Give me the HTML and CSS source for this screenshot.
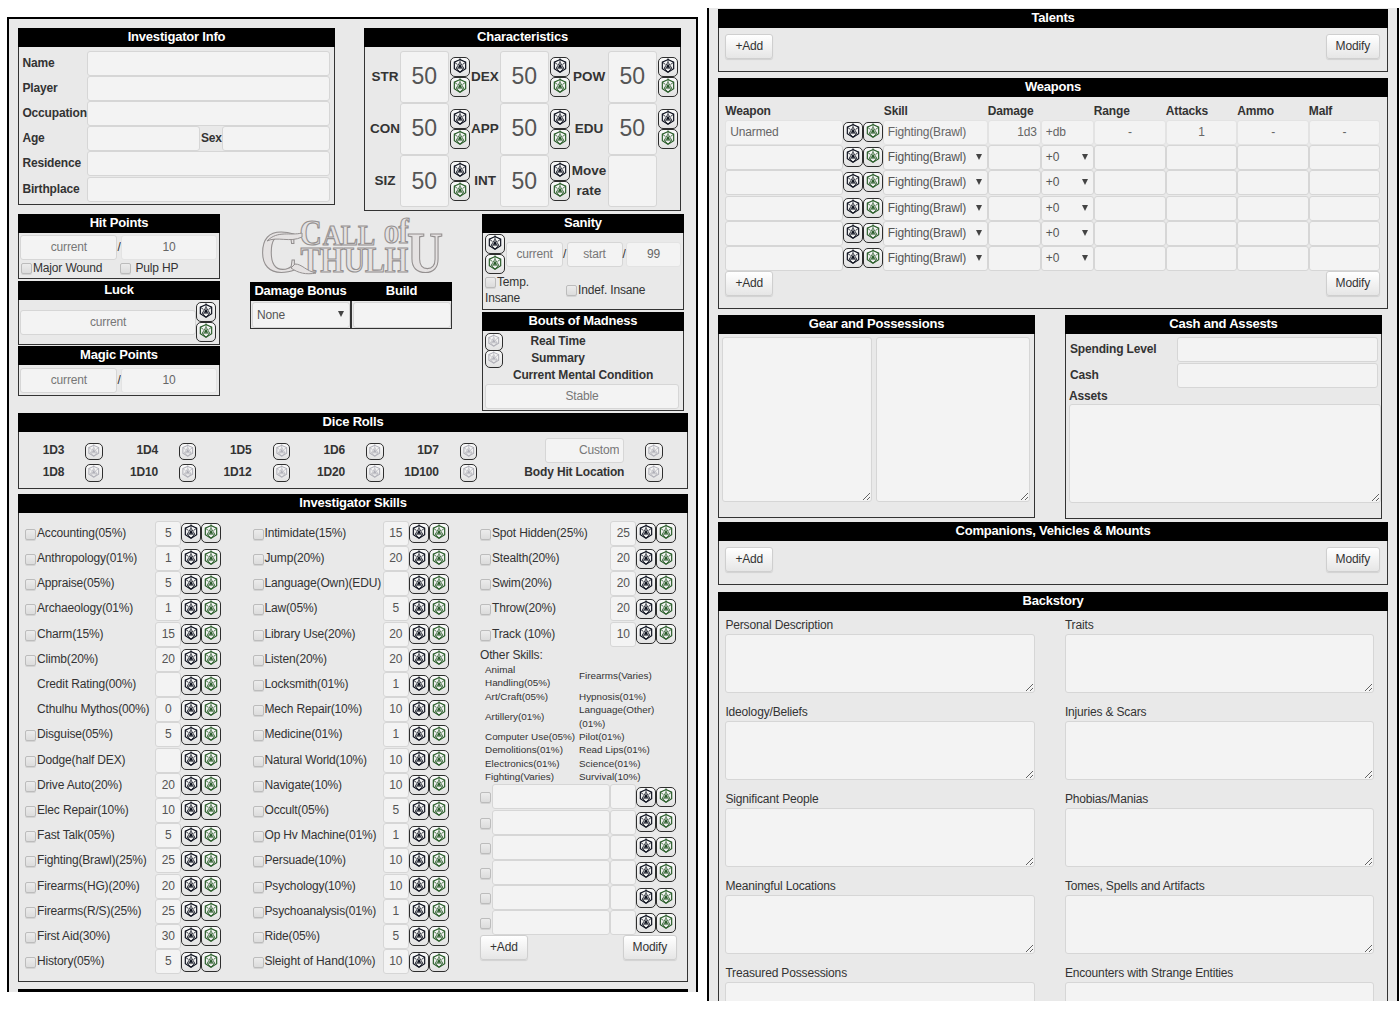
FILE: index.html
```html
<!DOCTYPE html>
<html lang="en">
<head>
<meta charset="utf-8">
<title>Investigator Sheet</title>
<link rel="stylesheet" href="styles.css">
</head>
<body>
<svg class="defs" width="0" height="0">
  <symbol id="d20" viewBox="0.8 1.4 18.4 18.4">
    <path d="M10 3L15.8 5.7V12.3L10 15.9L4.2 12.3V5.7Z" fill="none" stroke="currentColor" stroke-width="1.2"/>
    <path d="M10 1.6V5.6L13.8 11.8H6.2L10 5.6M4.2 5.7L7.4 8M15.8 5.7L12.6 8M6.2 11.8L10 15.9L13.8 11.8" fill="none" stroke="currentColor" stroke-width=".8"/>
    <path d="M10 7L12.2 11.3H7.8Z" fill="currentColor"/>
  </symbol>
</svg>
<main class="page">
  <div class="sheet sheet-left">
    <div class="top-row">
      <section class="panel info">
        <h2>Investigator Info</h2>
        <div class="info-grid">
          <b>Name</b><input class="wide">
          <b>Player</b><input class="wide">
          <b>Occupation</b><input class="wide">
          <b>Age</b><input><b class="sex">Sex</b><input>
          <b>Residence</b><input class="wide">
          <b>Birthplace</b><input class="wide">
        </div>
      </section>
      <section class="panel chars">
        <h2>Characteristics</h2>
        <div class="char-grid" id="characteristics"></div>
      </section>
    </div>

    <div class="mid-row">
      <div class="col">
        <section class="panel hp">
          <h2>Hit Points</h2>
          <div class="pair"><input placeholder="current"><span>/</span><input value="10" class="soft"></div>
          <div class="checks"><label><input type="checkbox">Major Wound</label><label class="pulp"><input type="checkbox">Pulp HP</label></div>
        </section>
        <section class="panel luck">
          <h2>Luck</h2>
          <div class="luck-row"><input placeholder="current"><div class="dice-stack"></div></div>
        </section>
        <section class="panel mp">
          <h2>Magic Points</h2>
          <div class="pair"><input placeholder="current"><span>/</span><input value="10" class="soft"></div>
        </section>
      </div>
      <div class="col">
        <svg class="logo" viewBox="0 0 182 60" width="182" height="60">
          <text class="logo-text" transform="scale(.86 1)"><tspan x="0" y="55" font-size="62">C</tspan><tspan x="46" y="28" font-size="36">C</tspan><tspan x="73 94 114" y="28" font-size="30">ALL</tspan><tspan x="144 161" y="26" font-size="36">of</tspan><tspan x="47 70 97 122 145" y="55" font-size="35">THULH</tspan><tspan x="171" y="55" font-size="58">U</tspan></text>
          <path class="logo-swash" d="M42 16C30 19 18 13 7 24C17 19 30 26 42 20Z"/>
          <path class="logo-swash" d="M35 47C42 47 46 54 56 56C46 58 38 56 31 51Z"/>
        </svg>
        <div class="bonus">
          <section class="panel"><h2>Damage Bonus</h2><div class="select">None</div></section>
          <section class="panel"><h2>Build</h2><input></section>
        </div>
      </div>
      <div class="col">
        <section class="panel sanity">
          <h2>Sanity</h2>
          <div class="san-row"><div class="dice-stack"></div><input placeholder="current"><span>/</span><input placeholder="start"><span>/</span><input value="99" class="soft"></div>
          <div class="san-checks"><label><input type="checkbox">Temp. Insane</label><label><input type="checkbox">Indef. Insane</label></div>
        </section>
        <section class="panel bouts">
          <h2>Bouts of Madness</h2>
          <div class="bout"><button class="die pale"></button><b>Real Time</b></div>
          <div class="bout"><button class="die pale"></button><b>Summary</b></div>
          <b class="condition">Current Mental Condition</b>
          <input placeholder="Stable">
        </section>
      </div>
    </div>

    <section class="panel rolls">
      <h2>Dice Rolls</h2>
      <div class="roll-grid">
        <b>1D3</b><button class="die pale"></button><b>1D4</b><button class="die pale"></button><b>1D5</b><button class="die pale"></button><b>1D6</b><button class="die pale"></button><b>1D7</b><button class="die pale"></button><input placeholder="Custom"><button class="die pale"></button>
        <b>1D8</b><button class="die pale"></button><b>1D10</b><button class="die pale"></button><b>1D12</b><button class="die pale"></button><b>1D20</b><button class="die pale"></button><b>1D100</b><button class="die pale"></button><b>Body Hit Location</b><button class="die pale"></button>
      </div>
    </section>

    <section class="panel skills">
      <h2>Investigator Skills</h2>
      <div class="skill-cols">
        <div id="skills-a"></div>
        <div id="skills-b"></div>
        <div>
          <div id="skills-c"></div>
          <p class="other-title">Other Skills:</p>
          <div class="other">
            <span>Animal Handling(05%)</span><span>Firearms(Varies)</span>
            <span>Art/Craft(05%)</span><span>Hypnosis(01%)</span>
            <span>Artillery(01%)</span><span>Language(Other)<br>(01%)</span>
            <span>Computer Use(05%)</span><span>Pilot(01%)</span>
            <span>Demolitions(01%)</span><span>Read Lips(01%)</span>
            <span>Electronics(01%)</span><span>Science(01%)</span>
            <span>Fighting(Varies)</span><span>Survival(10%)</span>
          </div>
          <div id="skills-custom"></div>
          <div class="actions"><button class="btn">+Add</button><button class="btn">Modify</button></div>
        </div>
      </div>
    </section>
    <div class="next-bar"></div>
  </div>

  <div class="sheet sheet-right">
    <section class="panel talents">
      <h2>Talents</h2>
      <div class="actions"><button class="btn">+Add</button><button class="btn">Modify</button></div>
    </section>
    <section class="panel weapons">
      <h2>Weapons</h2>
      <div class="weapon-row weapon-head"><b>Weapon</b><b class="skill-h">Skill</b><b class="dmg-h">Damage</b><b>Range</b><b>Attacks</b><b>Ammo</b><b>Malf</b></div>
      <div id="weapons"></div>
      <div class="actions"><button class="btn">+Add</button><button class="btn">Modify</button></div>
    </section>
    <div class="belongings">
      <section class="panel gear">
        <h2>Gear and Possessions</h2>
        <div class="gear-row"><textarea></textarea><textarea></textarea></div>
      </section>
      <section class="panel cash">
        <h2>Cash and Assests</h2>
        <div class="cash-row"><b>Spending Level</b><input></div>
        <div class="cash-row"><b>Cash</b><input></div>
        <b class="assets">Assets</b>
        <textarea></textarea>
      </section>
    </div>
    <section class="panel companions">
      <h2>Companions, Vehicles &amp; Mounts</h2>
      <div class="actions"><button class="btn">+Add</button><button class="btn">Modify</button></div>
    </section>
    <section class="panel backstory">
      <h2>Backstory</h2>
      <div class="story">
        <label>Personal Description<textarea></textarea></label><label>Traits<textarea></textarea></label>
        <label>Ideology/Beliefs<textarea></textarea></label><label>Injuries &amp; Scars<textarea></textarea></label>
        <label>Significant People<textarea></textarea></label><label>Phobias/Manias<textarea></textarea></label>
        <label>Meaningful Locations<textarea></textarea></label><label>Tomes, Spells and Artifacts<textarea></textarea></label>
        <label>Treasured Possessions<textarea></textarea></label><label>Encounters with Strange Entities<textarea></textarea></label>
      </div>
    </section>
  </div>
</main>
<script src="sheet.js"></script>
</body>
</html>
```
FILE: styles.css
```css
* { box-sizing: border-box; }

body {
  margin: 0;
  background: #fff;
  color: #333;
  font: 12px/18px "Liberation Sans", Arial, sans-serif;
  letter-spacing: -.16px;
}

.defs { position: absolute; }

.page { display: flex; align-items: flex-start; height: 1009px; overflow: hidden; }

.sheet { background: #e9e9e9; border: solid #000; overflow: hidden; flex: none; }
.sheet-left { margin: 17px 0 0 7px; width: 691px; height: 975px; border-width: 2px 2px 0; padding: 9px 0 0 9px; }
.sheet-right { margin: 8px 0 0 9px; width: 692px; height: 993px; border-width: 0 2px; padding: 1px 0 0 9px; }

.panel { border: 1px solid #333; position: relative; }
.panel h2 {
  margin: -1px -1px 0;
  height: 19px;
  background: #000;
  color: #fff;
  font-size: 13px;
  letter-spacing: -.2px;
  line-height: 18px;
  text-align: center;
}

input, textarea, .select {
  display: block;
  appearance: none;
  margin: 0;
  padding: 0 4px 1px;
  min-width: 0;
  width: 100%;
  height: 25px;
  border: 1px solid #d6d6d6;
  border-radius: 3px;
  background: #f3f3f3;
  color: #555;
  font: inherit;
  letter-spacing: inherit;
  text-align: center;
}
textarea { resize: both; }
input::placeholder { color: #777; opacity: 1; }
input.soft { border-color: #e3e3e3; color: #666; }
input[type="checkbox"] {
  display: inline-block;
  width: 11px;
  height: 11px;
  padding: 0;
  margin: 0 1px 0 0;
  vertical-align: -2px;
  border: 1px solid #bcbcbc;
  border-radius: 2px;
  background: linear-gradient(#ececec, #dcdcdc);
  box-shadow: 0 1px 0 #d4d4d4;
}
.select { text-align: left; padding: 0 4px; line-height: 23px; position: relative; }
.select::after {
  content: "";
  position: absolute;
  right: 5px;
  top: 8px;
  border: solid transparent;
  border-width: 6px 3px 0;
  border-top-color: #444;
}

.die {
  display: block;
  flex: none;
  width: 20px;
  height: 20px;
  padding: 0;
  border: 1.4px solid #2e2e2e;
  border-radius: 5px;
  background: linear-gradient(#fafafa, #e2e2e2);
  color: #0b0f1c;
}
.die.green { color: #285c28; }
.die.pale { width: 17.5px; height: 17.5px; color: #b0b0b8; }
.die svg { display: block; width: 100%; height: 100%; }
.dice-stack { width: 20px; flex: none; }

.btn {
  height: 25px;
  padding: 0 9px 2px;
  border: 1px solid #cfcfcf;
  border-radius: 3px;
  background: linear-gradient(#fff, #e6e6e6);
  box-shadow: 0 1px 1px rgba(0, 0, 0, .1);
  color: #333;
  font: inherit;
  letter-spacing: inherit;
}
.actions { display: flex; justify-content: space-between; }

/* top row */
.top-row { display: flex; gap: 29px; align-items: flex-start; }
.info { width: 317px; height: 177px; }
.info-grid { display: grid; grid-template-columns: 65.5px 113px 22px 108px; grid-auto-rows: 25.2px; padding: 3.6px 0 0 2.4px; }
.info-grid b { line-height: 25px; padding-left: 1px; }
.info-grid .wide { grid-column: span 3; }
.chars { width: 317px; height: 183px; }
.char-grid { display: grid; grid-template-columns: 35px 48.5px 21.5px 30px 48.5px 21.5px 38px 48.5px 21.5px; grid-auto-rows: 52.2px; padding-top: 3.6px; align-items: center; }
.char-grid b { font-size: 13.5px; line-height: 20px; text-align: center; letter-spacing: 0; }
.char-grid b:nth-of-type(3n+1) { padding-left: 5px; }
.char-grid input { height: 52px; font-size: 23px; padding: 0; letter-spacing: 0; }
.char-grid .dice-stack { margin-left: 1px; }

/* middle row */
.mid-row { display: grid; grid-template-columns: 202px 202px 202px; column-gap: 30px; margin-top: 3px; height: 199px; }
.pair { display: grid; grid-template-columns: 97px 3.5px 96px; padding: 2px 0 0 1.4px; line-height: 24px; }
.hp { height: 65px; }
.checks { display: flex; padding: 0 0 0 2px; line-height: 16px; }
.pulp { margin-left: 18px; }
.pulp input { margin-right: 4px; }
.luck { height: 64px; margin-top: 2px; }
.luck-row { display: flex; padding: 2px 0 0 1.4px; align-items: center; }
.luck-row input { width: 175.5px; }
.mp { height: 50px; margin-top: 1px; }
.mp .pair { padding-top: 3px; }
.logo { display: block; margin: 3px 0 5px 10px; overflow: visible; }
.logo-text { font-family: "Liberation Serif", serif; font-weight: 700; letter-spacing: 0; fill: #e5e2e2; stroke: #949090; stroke-width: 1.2; }
.logo-swash { fill: #e5e2e2; stroke: #949090; stroke-width: 1; }
.bonus { display: flex; }
.bonus .panel { width: 101px; height: 47px; }
.bonus .select, .bonus input { margin: 1px 0 0 1px; width: 98px; height: 26px; }
.bonus .select { line-height: 24px; }
.sanity { height: 96px; }
.san-row { display: grid; grid-template-columns: 21px 57px 3.5px 56px 3.5px 55px; align-items: center; padding: 1px 0 0 2px; }
.san-checks { display: grid; grid-template-columns: 81px auto; padding-left: 2px; align-items: center; line-height: 16px; }
.bouts { height: 99px; margin-top: 2px; }
.bout { display: grid; grid-template-columns: 17px 112px; padding-left: 2px; height: 17px; line-height: 16px; text-align: center; }
.bouts h2 + .bout { margin-top: 2px; }
.condition { display: block; text-align: center; line-height: 17px; }
.bouts > input { margin-left: 2px; width: 194px; }

/* dice rolls */
.rolls { width: 670px; height: 76px; }
.roll-grid { display: grid; grid-template-columns: 45.4px 48.2px 45.4px 48.2px 45.4px 48.2px 45.4px 48.2px 45.4px 28px 157.6px 40px; grid-template-rows: 25px 18px; row-gap: 0; padding-top: 5.6px; align-items: center; }
.roll-grid b { text-align: right; }
.roll-grid .die { margin-left: 21px; margin-top: 3px; }
.roll-grid input { width: 79px; justify-self: end; text-align: right; }

/* skills */
.skills { width: 670px; height: 488px; margin-top: 5px; }
.skill-cols { display: grid; grid-template-columns: repeat(3, 197px); column-gap: 30.5px; padding: 7.8px 0 0 6px; }
.skill { display: grid; grid-template-columns: 12px 118px 26.4px 20px 20px; height: 25.2px; align-items: center; white-space: nowrap; }
.skill span { padding-bottom: 1px; }
.skill input { padding: 0 0 1px; }
.skill input[type="checkbox"] { margin-top: 2px; }
.skill .none { visibility: hidden; }
.skill .die { margin-top: 0; }
.skill input.name { width: 118px; }
.other-title { margin: 0; line-height: 16px; }
.other { display: grid; grid-template-columns: 94px 98px; align-items: center; padding-left: 5px; font-size: 9.9px; line-height: 13.45px; letter-spacing: 0; margin-bottom: 1px; }
.other span:first-child { width: 80px; }
#skills-custom { margin-top: -.5px; }
.next-bar { width: 670px; height: 3px; margin-top: 7px; background: #000; }

/* right page */
.sheet-right > .panel { width: 670px; }
.talents { height: 63px; }
.talents .actions, .companions .actions { padding: 6.4px 7px 0 6.4px; }
.weapons { height: 231px; margin-top: 6px; }
.weapons .actions { padding: 0 7px 0 6.4px; }
.weapon-row { display: grid; grid-template-columns: 117.5px 20px 20px 105px 53px 53px 72px 71.5px 71.5px 71px; padding-left: 6.3px; height: 25.2px; align-items: center; }
.weapon-head { height: 23px; padding-top: 4px; }
.skill-h { grid-column: 4; padding-left: 1px; }
.dmg-h { grid-column: span 2; }
.weapon-row .left { text-align: left; }
.weapon-row .right { text-align: right; padding-right: 3px; }
.weapon-row .die { margin-top: -1px; }
.belongings { display: flex; gap: 30px; margin-top: 6px; height: 207px; }
.gear, .cash { width: 317px; height: 203px; }
.cash { height: 204px; }
.gear-row { display: flex; gap: 3.5px; padding: 3.4px 0 0 3.4px; }
.gear-row textarea { width: 150px; height: 165px; }
.gear-row textarea + textarea { width: 154px; }
.cash-row { display: grid; grid-template-columns: 107px 201px; height: 25.2px; padding-left: 4px; line-height: 25px; }
.cash h2 + .cash-row { margin-top: 3.4px; }
.assets { display: block; margin-left: 3px; line-height: 16px; }
.cash textarea { margin-left: 3px; width: 312px; height: 99px; }
.companions { height: 63px; }
.backstory { height: 480px; margin-top: 7px; }
.story { display: grid; grid-template-columns: 309.5px 309.5px; column-gap: 30px; grid-auto-rows: 87.2px; padding: 4.6px 0 0 6.4px; }
.story textarea { height: 59px; }
```
FILE: sheet.js
```js
const icon = '<svg><use href="#d20"/></svg>';
const dice = `<button class="die">${icon}</button><button class="die green">${icon}</button>`;
const byId = id => document.getElementById(id);

byId("characteristics").innerHTML = ["STR", "DEX", "POW", "CON", "APP", "EDU", "SIZ", "INT", "Move rate"]
  .map(n => `<b>${n}</b><input value="${n === "Move rate" ? "" : 50}">` +
    (n === "Move rate" ? "" : `<div class="dice-stack">${dice}</div>`)).join("");

const skills = {
  a: [["Accounting(05%)", 5], ["Anthropology(01%)", 1], ["Appraise(05%)", 5], ["Archaeology(01%)", 1],
    ["Charm(15%)", 15], ["Climb(20%)", 20], ["Credit Rating(00%)", "", 1], ["Cthulhu Mythos(00%)", 0, 1],
    ["Disguise(05%)", 5], ["Dodge(half DEX)", ""], ["Drive Auto(20%)", 20], ["Elec Repair(10%)", 10],
    ["Fast Talk(05%)", 5], ["Fighting(Brawl)(25%)", 25], ["Firearms(HG)(20%)", 20],
    ["Firearms(R/S)(25%)", 25], ["First Aid(30%)", 30], ["History(05%)", 5]],
  b: [["Intimidate(15%)", 15], ["Jump(20%)", 20], ["Language(Own)(EDU)", ""], ["Law(05%)", 5],
    ["Library Use(20%)", 20], ["Listen(20%)", 20], ["Locksmith(01%)", 1], ["Mech Repair(10%)", 10],
    ["Medicine(01%)", 1], ["Natural World(10%)", 10], ["Navigate(10%)", 10], ["Occult(05%)", 5],
    ["Op Hv Machine(01%)", 1], ["Persuade(10%)", 10], ["Psychology(10%)", 10],
    ["Psychoanalysis(01%)", 1], ["Ride(05%)", 5], ["Sleight of Hand(10%)", 10]],
  c: [["Spot Hidden(25%)", 25], ["Stealth(20%)", 20], ["Swim(20%)", 20], ["Throw(20%)", 20], ["Track (10%)", 10]],
  custom: Array(6).fill([null, ""])
};

for (const [key, rows] of Object.entries(skills)) {
  byId("skills-" + key).innerHTML = rows.map(([name, value, locked]) =>
    `<div class="skill"><input type="checkbox" class="${locked ? "none" : ""}">` +
    (name ? `<span>${name}</span>` : '<input class="name">') +
    `<input value="${value}">${dice}</div>`).join("");
}

const blank = "<input>".repeat(4);
byId("weapons").innerHTML =
  `<div class="weapon-row"><input class="soft left" value="Unarmed">${dice}<input class="soft left" value="Fighting(Brawl)">` +
  '<input class="soft right" value="1d3"><input class="soft left" value="+db">' +
  ["-", "1", "-", "-"].map(v => `<input class="soft" value="${v}">`).join("") + "</div>" +
  `<div class="weapon-row"><input>${dice}<div class="select">Fighting(Brawl)</div><input><div class="select">+0</div>${blank}</div>`.repeat(5);

document.querySelectorAll(".dice-stack:empty").forEach(el => { el.innerHTML = dice; });
document.querySelectorAll(".die.pale").forEach(el => { el.innerHTML = icon; });
```
